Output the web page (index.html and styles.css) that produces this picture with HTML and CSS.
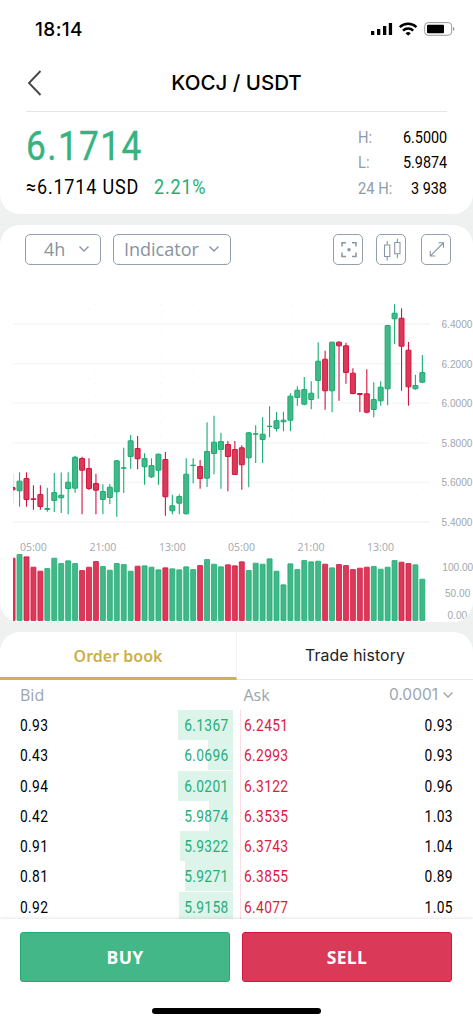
FILE: index.html
```html
<!DOCTYPE html>
<html lang="en">
<head>
<meta charset="utf-8">
<title>KOCJ / USDT</title>
<link rel="stylesheet" href="styles.css">
</head>
<body>
<main class="app">
  <section class="card summary">
    <div class="status">
      <span class="time">18:14</span>
      <svg class="status-icons" width="86" height="18" viewBox="370 20 86 18">
        <path d="M371 31h3.3v4h-3.3zM377 29h3.3v6h-3.3zM383 26h3.3v9h-3.3zM388.8 23h3.3v12h-3.3z"/>
        <g fill="none" stroke="#000" stroke-width="2.5"><path d="M399.8 27.2a12 12 0 0 1 16.6 0"/><path d="M403 30.600a7.300 7.300 0 0 1 10.200 0"/></g>
        <path d="M405.500 33.200a4 4 0 0 1 5.300 0l-2.650 2.500z"/>
        <rect x="424.700" y="22.600" width="27" height="12.700" rx="3.500" fill="none" stroke="#999"/>
        <rect x="427" y="24.700" width="17" height="8.500" rx="1"/>
        <path d="M453 27v4q1.500-.6 1.500-2t-1.500-2" fill="#999"/>
      </svg>
    </div>
    <header class="head">
      <svg class="back" width="18" height="28" viewBox="0 0 18 28"><path d="M14.500 2 3 14l11.500 12" fill="none" stroke="#46464d" stroke-width="1.900"/></svg>
      <h1 class="pair">KOCJ / USDT</h1>
    </header>
    <div class="quote">
      <div class="quote-main">
        <div class="price">6.1714</div>
        <div class="sub"><span class="usd">≈6.1714 USD</span><span class="change">2.21%</span></div>
      </div>
      <dl class="stats">
        <div class="stat"><dt>H:</dt><dd>6.5000</dd></div>
        <div class="stat"><dt>L:</dt><dd>5.9874</dd></div>
        <div class="stat"><dt>24 H:</dt><dd>3 938</dd></div>
      </dl>
    </div>
  </section>

  <section class="card chart-card">
    <div class="tools">
      <button class="select interval">4h<svg width="12" height="8" viewBox="0 0 12 8"><path d="m1.500 1.500 4.500 4.500 4.500-4.500"/></svg></button>
      <button class="select indicator">Indicator<svg width="12" height="8" viewBox="0 0 12 8"><path d="m1.500 1.500 4.500 4.500 4.500-4.500"/></svg></button>
      <button class="tool first"><svg width="30" height="30" viewBox="0 0 30 30"><g stroke-width="1.500"><path d="M8 11.500V7.800h4M18 7.800h4v3.700M22 17.500v4h-4M12 21.500H8v-4"/></g><circle cx="15" cy="14.700" r="1.700" class="dot"/></svg></button>
      <button class="tool"><svg width="30" height="30" viewBox="0 0 30 30"><path d="M7.500 10h5.300v11.500H7.500zM17.700 7.500H23v11.200h-5.300zM10.200 6v4M10.200 21.500v4M20.400 3.700v3.800M20.400 18.700v4.300"/></svg></button>
      <button class="tool last"><svg width="30" height="30" viewBox="0 0 30 30"><path d="M8.500 20.800 21.300 8M16.500 7.800h5v5M8.300 16v5h5"/></svg></button>
    </div>
    <svg class="chart" width="473" height="337" viewBox="0 285 473 337">
      <defs><clipPath id="plot"><rect x="13" y="285" width="418" height="337"/></clipPath></defs>
      <g id="grid"></g>
      <g id="candles" clip-path="url(#plot)"></g>
      <g class="axis price-axis">
        <text x="441.500" y="328">6.4000</text><text x="441.500" y="367.600">6.2000</text><text x="441.500" y="407.200">6.0000</text>
        <text x="441.500" y="446.800">5.8000</text><text x="441.500" y="486.300">5.6000</text><text x="441.500" y="526">5.4000</text>
        <text x="442.300" y="571">100.00</text><text x="445" y="597.300">50.00</text><text x="447.500" y="619">0.00</text>
      </g>
      <g class="axis time-axis">
        <text x="33.300" y="551">05:00</text><text x="102.800" y="551">21:00</text><text x="172.300" y="551">13:00</text>
        <text x="241.500" y="551">05:00</text><text x="311" y="551">21:00</text><text x="380.500" y="551">13:00</text>
      </g>
    </svg>
  </section>

  <section class="card book">
    <nav class="tabs"><a class="tab active">Order book</a><a class="tab">Trade history</a></nav>
    <div class="book-head"><span class="bid-label">Bid</span><span class="ask-label">Ask</span><span class="step">0.0001<svg width="12" height="8" viewBox="0 0 12 8"><path d="m1.500 1.500 4.500 4.500 4.500-4.500"/></svg></span></div>
    <div class="rows" id="rows"></div>
  </section>

  <footer class="actions">
    <div class="buttons"><button class="trade buy">BUY</button><button class="trade sell">SELL</button></div>
    <div class="home"></div>
  </footer>
</main>
<script src="app.js"></script>
</body>
</html>
```
FILE: styles.css
```css
* { box-sizing: border-box; }
body { margin: 0; background: #eff1f1; font-family: "Open Sans", "Noto Sans", sans-serif; color: #000; }
button { font: inherit; padding: 0; background: none; }
svg { display: block; flex: none; }
.app { width: 473px; height: 1024px; display: flex; flex-direction: column; overflow: hidden; }
.card { background: #fff; flex: none; }
.summary { height: 214px; border-radius: 0 0 20px 20px; }
.status { height: 58px; display: flex; justify-content: space-between; padding: 20px 17px 0 35px; }
.time { font: 500 19px/19px Inter, sans-serif; letter-spacing: .4px; }
.head { height: 54px; margin: 0 26px; display: flex; align-items: center; border-bottom: 1px solid #e3e5e6; }
.back { margin-top: -4px; }
.pair { flex: 1; margin: -3px 18px 0 0; text-align: center; font: 500 20.500px/24px Inter, sans-serif; }
.quote { display: flex; justify-content: space-between; padding: 11px 26px 0; font-family: Roboto, sans-serif; }
.price { font-size: 40.500px; line-height: 46px; color: #36b380; -webkit-text-stroke: .4px #36b380; letter-spacing: 1.600px; transform: scaleX(.87); transform-origin: left; }
.sub { display: flex; gap: 12px; font-size: 20px; line-height: 24px; margin-top: 6px; }
.usd, .change { white-space: nowrap; letter-spacing: .900px; transform: scaleX(.9); transform-origin: left; }
.usd { width: 116px; }
.change { color: #1fae74; }
.stats { margin: 2px 0 0; width: 89px; font-size: 16px; }
.stat { display: flex; justify-content: space-between; height: 25.300px; line-height: 25px; white-space: nowrap; }
.stat dt { color: #8f9ba7; transform: scaleX(.92); transform-origin: left; }
.stat dd { margin: 0; transform: scaleX(.9); transform-origin: right; }

.chart-card { margin-top: 10.500px; height: 397px; border-radius: 20px; overflow: hidden; }
.tools { height: 60.500px; display: flex; padding: 9.500px 22px 0 25px; color: #88939f; }
.tools svg { fill: none; stroke: #8995a2; stroke-width: 1.100; }
.select, .tool { height: 30.500px; border: 1px solid #93a0ac; border-radius: 5px; color: #88939f; }
.select { display: flex; align-items: center; justify-content: space-between; font-size: 18px; line-height: 26px; }
.select svg { stroke-width: 1.400; }
.interval { width: 76px; padding: 0 10px 0 18px; margin-right: 12px; }
.indicator { width: 118px; padding: 0 10px; }
.tool { width: 30.500px; display: grid; place-items: center; margin-right: 12.500px; }
.tool.first { margin-left: auto; }
.tool.last { margin: 0 0 0 2px; }
.tools .dot { fill: #8995a2; stroke: none; }
.axis text { fill: #a0a8b1; font-size: 10.500px; }
.price-axis text { font-family: "Liberation Sans", sans-serif; font-size: 10.100px; }
.time-axis text { text-anchor: middle; }
.grid-line { stroke: #f4f5f6; stroke-width: 1.300; }
.grid-dot { fill: #eef0f2; }
.up { fill: #43b788; stroke: #16ad72; }
.down { fill: #da3a58; stroke: #d5133f; }
.volume { stroke-opacity: .75; }

.book { margin-top: 10.500px; height: 287px; border-radius: 20px 20px 0 0; overflow: hidden; }
.tabs { display: flex; height: 47.500px; }
.tab { flex: 1; border-bottom: 1.500px solid #e6e8e9; text-align: center; font: 400 15.800px/48px Inter, sans-serif; color: #222; letter-spacing: .1px; }
.tab.active { border-bottom: 3.500px solid #d0b14b; border-right: 1px solid #f1f2f3; color: #ccb04a; font: 600 16px/48px "Noto Sans", sans-serif; letter-spacing: 0; }
.book-head { height: 30.500px; display: grid; grid-template-columns: 223.500px 1fr auto; padding: 0 19px 0 20px; line-height: 30px; font-size: 16px; color: #9ba5af; }
.step { display: flex; align-items: center; gap: 4px; font-family: Inter, sans-serif; font-size: 15.500px; }
.step svg { fill: none; stroke: #9ba5af; stroke-width: 1.400; }
.row { height: 30.300px; display: grid; grid-template-columns: 233px 7px 1fr; font: 16px/31px Roboto, sans-serif; }
.bid { display: flex; justify-content: space-between; padding: 0 4px 0 20px; background: linear-gradient(#ddf4eb, #ddf4eb) right top / var(--depth) calc(100% - .700px) no-repeat; }
.ask { grid-column: 3; display: flex; justify-content: space-between; padding: 0 20px 0 3px; border-left: 1px solid #fbdde3; }
.row span { letter-spacing: .400px; transform: scaleX(.86); transform-origin: left; }
.row .right { transform-origin: right; }
.green { color: #27ae77; }
.red { color: #d91c43; }

.actions { flex: 1; background: #fff; box-shadow: 0 -1px 3px rgba(0,0,0,.1); position: relative; padding: 13px 21px 0 20px; }
.buttons { display: grid; grid-template-columns: 1fr 1fr; gap: 12px; }
.trade { height: 50px; border-radius: 3px; border: 1px solid; color: #fff; font-size: 17.500px; font-weight: 700; letter-spacing: .3px; }
.buy { background: #43b788; border-color: #1fac75; }
.sell { background: #da3a58; border-color: #d5133f; }
.home { width: 169px; height: 6px; border-radius: 3px; background: #000; margin: 25.500px auto 0; }
```
FILE: app.js
```js
// direction, high, low, body top, body bottom, volume top
const candles = [
["d",473.7,503.7,487,490.3,53],["u",472.3,506.7,480.7,491.3,42],["d",472.3,506.7,478,500,49],["d",485.3,509.7,498.3,500,80],
["d",485.3,509.7,494,507,92],["u",487.7,511.7,508,510,84],["u",473,512,492,501,53],["u",472.5,513,494.7,498.3,69],
["u",472.3,514.3,481.7,489,61],["u",456,492.7,456.7,488.7,69],["d",456.7,514.3,458,470.7,90],["d",458.3,490,468,489,80],
["d",473.7,514.3,483,490.7,63],["u",484.3,514.3,491,500,78],["u",484,504,486.7,498,89],["u",460,516.7,460.3,492.3,69],
["u",447.7,493,467.3,468.7,72],["u",435,468.7,440.3,457,92],["d",436,469.3,448,459.3,77],["u",453.3,484.7,458,467.3,76],
["u",458.3,478,465,477.3,80],["u",453.7,484.7,453.7,470.7,88],["d",452,515.7,459,497.3,82],["u",494.7,514.3,505.3,511.3,85],
["u",494.3,514.3,496,503.7,88],["u",458.3,514.3,473.7,514.3,79],["u",458.3,483.3,464.7,466,87],["d",460,488.7,466,479,75],
["u",422.3,487,451,478.7,57],["u",415.7,474.3,441.7,454,71],["u",432.7,488.7,441,450,79],["d",441,491.3,444,457,73],
["d",441,475,449,475,76],["d",445.3,489.7,447.3,465.3,64],["u",432,487.3,432.3,458.3,90],["u",425.3,463,433.3,434.7,68],
["u",417.3,463,433.7,440,71],["u",406.3,437.3,425.7,427,55],["u",412,431.5,420.2,429,92],["u",411.7,431.3,419.7,422.3,133],
["u",393.3,431.3,395.7,420.7,70],["u",386.3,405.7,389.7,398,87],["u",377,405.3,389,404.7,60],["u",381.3,409.3,392.7,400,64],
["u",342.3,398.7,360.7,381,62],["d",350.7,409.7,358.7,391.3,71],["u",341.7,412.3,341.7,391.3,82],["d",341.3,400.7,341.7,346.3,72],
["d",342.7,383.7,345.3,373,75],["d",368.3,394.3,372.7,394,87],["d",393,412,393,395,83],["d",369.3,413.3,393.3,412.7,80],
["u",382.3,417.3,399,410,78],["u",381.3,405.7,386.7,401.3,86],["u",325,405.3,325,389.3,80],["u",304.3,344,312.7,319.3,60],
["d",308.3,390.7,317.7,346.7,65],["d",342,405.7,349.7,387.3,69],["u",374.7,389.7,385,389.3,73],["u",355,383,372,382.7,116]
];
const base = 621;
let grid = "";
for (let y = 324; y < 530; y += 39.6) grid += `<path class="grid-line" d="M13 ${y}H430"/>`;
for (let x = 29; x < 430; x += 32.75)
  for (let y = 304; y < 520; y += 13.15) grid += `<rect class="grid-dot" x="${x}" y="${y}" width="1" height="1"/>`;
document.getElementById("grid").innerHTML = grid;

document.getElementById("candles").innerHTML = candles.map(([dir, high, low, top, bottom, vol], i) => {
  const x = 12.6 + i * 6.945, v = 540 + vol / 3;
  const bar = (y, h, cls) => `<rect class="${cls}" x="${x - 2.5}" y="${y + .5}" width="5" height="${Math.max(.4, h - 1)}" rx=".3"/>`;
  return `<g class="${dir === "u" ? "up" : "down"}"><path d="M${x} ${high}V${low}" stroke-width="1.1"/>${bar(top, bottom - top, "body")}${bar(v, base - v, "volume")}</g>`;
}).join("");

// bid size, bid price, depth width, ask price, ask size
const orders = [
["0.93","6.1367",55,"6.2451","0.93"],["0.43","6.0696",25,"6.2993","0.93"],["0.94","6.0201",55,"6.3122","0.96"],
["0.42","5.9874",24.5,"6.3535","1.03"],["0.91","5.9322",53,"6.3743","1.04"],["0.81","5.9271",48,"6.3855","0.89"],["0.92","5.9158",54,"6.4077","1.05"]
];
document.getElementById("rows").innerHTML = orders.map(([bs, bp, depth, ap, as]) =>
  `<div class="row"><div class="bid" style="--depth:${depth}px"><span>${bs}</span><span class="right green">${bp}</span></div>` +
  `<div class="ask"><span class="red">${ap}</span><span class="right">${as}</span></div></div>`).join("");
```
